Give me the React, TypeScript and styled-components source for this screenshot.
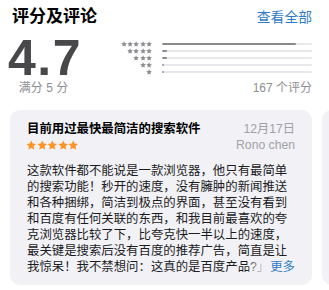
import React from 'react';
import styled, { createGlobalStyle } from 'styled-components';

const GlobalStyle = createGlobalStyle`
  body {
    margin: 0;
    background: #ffffff;
    font-family: "Liberation Sans", "Noto Sans CJK SC", sans-serif;
    -webkit-font-smoothing: antialiased;
  }
`;

const Page = styled.div`
  width: 329px;
  height: 290px;
  overflow: hidden;
  box-sizing: border-box;
  padding: 0 17px 0 12px;
`;

const Header = styled.div`
  display: flex;
  justify-content: space-between;
  align-items: center;
  margin-top: 7px;
  height: 20px;
`;

const Title = styled.h2`
  margin: 0;
  font-size: 17px;
  line-height: 20px;
  font-weight: 700;
  color: #000;
`;

const SeeAll = styled.a`
  font-size: 13.8px;
  line-height: 20px;
  color: #2f7cc4;
  margin-top: 2px;
  text-decoration: none;
`;

const Summary = styled.div`
  display: flex;
  padding-top: 11px;
`;

const ScoreColumn = styled.div`
  display: flex;
  flex-direction: column;
  align-items: center;
  width: 68px;
  margin-left: -1px;
`;

const BigScore = styled.div`
  font-size: 50px;
  line-height: 40px;
  font-weight: 700;
  letter-spacing: 1.5px;
  color: #48484a;
`;

const Caption = styled.div`
  font-size: 12px;
  line-height: 14px;
  color: #8e8e93;
  white-space: nowrap;
`;

const OutOf = styled(Caption)`
  margin-top: 3px;
  margin-left: -3px;
`;

const Histogram = styled.div`
  flex: 1;
  display: flex;
  flex-direction: column;
  padding-top: 2.5px;
`;

const HistRow = styled.div`
  display: flex;
  align-items: center;
  height: 7px;
  gap: 10px;
`;

const SmallStars = styled.div`
  width: 73px;
  display: flex;
  justify-content: flex-end;
`;

const Track = styled.div`
  flex: 1;
  height: 2px;
  background: #e8e8ed;
  border-radius: 1px;
  overflow: hidden;
`;

const Fill = styled.div`
  height: 100%;
  background: #8a8a8e;
  border-radius: 1px;
`;

const Count = styled(Caption)`
  align-self: flex-end;
  margin-top: 5.5px;
`;

const CardsRow = styled.div`
  display: flex;
  gap: 10px;
  margin: 15px -17px 0 -2px;
  overflow: hidden;
`;

const Card = styled.div`
  flex: 0 0 302px;
  box-sizing: border-box;
  height: 175px;
  padding: 9px 17px 10px;
  border-radius: 10px;
  background: #f1f1f6;
  position: relative;
  overflow: hidden;
`;

const MetaRow = styled.div<{ $height: number }>`
  display: flex;
  justify-content: space-between;
  align-items: center;
  height: ${(p) => p.$height}px;
`;

const ReviewTitle = styled.div`
  font-size: 12.4px;
  font-weight: 700;
  color: #000;
  white-space: nowrap;
`;

const Meta = styled.div`
  font-size: 12.2px;
  color: #a1a1a6;
  white-space: nowrap;
`;

const OrangeStars = styled.div`
  display: flex;
  margin-left: -1px;
`;

const Body = styled.div`
  margin-top: 9px;
  font-size: 12.4px;
  line-height: 16px;
  color: #1c1c1e;
`;

const Line = styled.div`
  white-space: nowrap;
  overflow: hidden;
`;

const More = styled.span`
  position: absolute;
  right: 17px;
  bottom: 10px;
  line-height: 16px;
  font-size: 12.4px;
  color: #2f7cc4;
  padding-left: 24px;
  background: linear-gradient(to right, rgba(241, 241, 246, 0) 0, #f1f1f6 20px);
`;

function Star({ size, color }: { size: number; color: string }) {
  return (
    <svg width={size} height={size} viewBox="0 0 24 24">
      <path
        d="M12 1.2l3.3 6.9 7.5.9-5.5 5.2 1.4 7.5L12 18l-6.7 3.7 1.4-7.5L1.2 9l7.5-.9z"
        fill={color}
      />
    </svg>
  );
}

const distribution = [89, 3.5, 3.5, 1.5, 1.5];

const lines = [
  '这款软件都不能说是一款浏览器，他只有最简单',
  '的搜索功能！秒开的速度，没有臃肿的新闻推送',
  '和各种捆绑，简洁到极点的界面，甚至没有看到',
  '和百度有任何关联的东西，和我目前最喜欢的夸',
  '克浏览器比较了下，比夸克快一半以上的速度，',
  '最关键是搜索后没有百度的推荐广告，简直是让',
  '我惊呆！我不禁想问：这真的是百度产品?」还有',
];

export default function App() {
  return (
    <Page>
      <GlobalStyle />
      <Header>
        <Title>评分及评论</Title>
        <SeeAll>查看全部</SeeAll>
      </Header>
      <Summary>
        <ScoreColumn>
          <BigScore>4.7</BigScore>
          <OutOf>满分 5 分</OutOf>
        </ScoreColumn>
        <Histogram>
          {distribution.map((pct, i) => (
            <HistRow key={i}>
              <SmallStars>
                {Array.from({ length: 5 - i }).map((_, j) => (
                  <Star key={j} size={6.2} color="#8e8e93" />
                ))}
              </SmallStars>
              <Track>
                <Fill style={{ width: `${pct}%` }} />
              </Track>
            </HistRow>
          ))}
          <Count>167 个评分</Count>
        </Histogram>
      </Summary>
      <CardsRow>
        <Card>
          <MetaRow $height={17}>
            <ReviewTitle>目前用过最快最简洁的搜索软件</ReviewTitle>
            <Meta>12月17日</Meta>
          </MetaRow>
          <MetaRow $height={18}>
            <OrangeStars>
              {Array.from({ length: 5 }).map((_, j) => (
                <Star key={j} size={10.5} color="#fd9526" />
              ))}
            </OrangeStars>
            <Meta>Rono chen</Meta>
          </MetaRow>
          <Body>
            {lines.map((l, i) => (
              <Line key={i}>{l}</Line>
            ))}
          </Body>
          <More>更多</More>
        </Card>
        <Card />
      </CardsRow>
    </Page>
  );
}
